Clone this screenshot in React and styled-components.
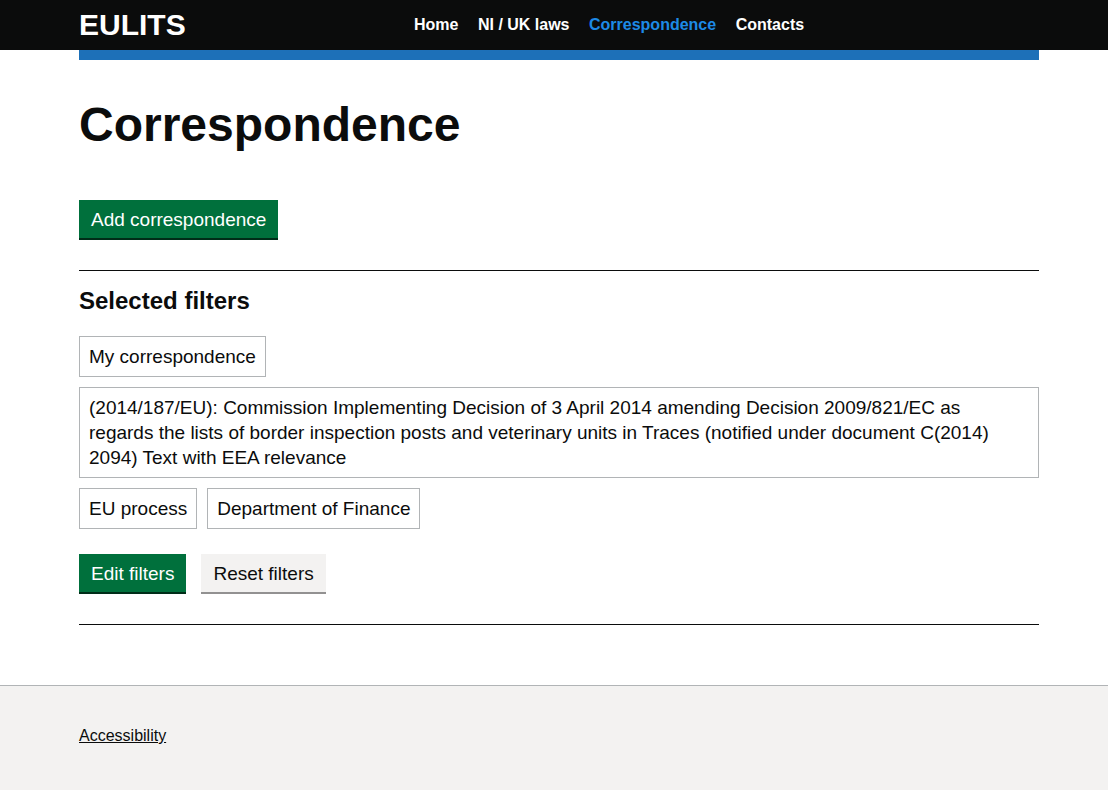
import React from "react";
import styled, { createGlobalStyle } from "styled-components";

const filters = [
  "My correspondence",
  "(2014/187/EU): Commission Implementing Decision of 3 April 2014 amending Decision 2009/821/EC as regards the lists of border inspection posts and veterinary units in Traces (notified under document C(2014) 2094) Text with EEA relevance",
  "EU process",
  "Department of Finance",
];

const navItems = [
  { label: "Home" },
  { label: "NI / UK laws" },
  { label: "Correspondence", active: true },
  { label: "Contacts" },
];

const App = () => {
  return (
    <Page>
      <GlobalStyle />
      <Header>
        <HeaderInner>
          <LogoCol>
            <Logo href="#">EULITS</Logo>
          </LogoCol>
          <Nav>
            {navItems.map((item) => (
              <NavLink key={item.label} href="#" $active={item.active}>
                {item.label}
              </NavLink>
            ))}
          </Nav>
        </HeaderInner>
      </Header>
      <Container>
        <BlueBar />
        <Main>
          <Title>Correspondence</Title>
          <Button $variant="primary">Add correspondence</Button>
          <Rule $top={32} $bottom={15} />
          <SubTitle>Selected filters</SubTitle>
          <TagList>
            {filters.map((f) => (
              <Tag key={f}>{f}</Tag>
            ))}
          </TagList>
          <ButtonRow>
            <Button $variant="primary">Edit filters</Button>
            <Button $variant="secondary">Reset filters</Button>
          </ButtonRow>
          <Rule $top={32} $bottom={0} />
        </Main>
      </Container>
      <Footer>
        <Container>
          <FooterLink href="#">Accessibility</FooterLink>
        </Container>
      </Footer>
    </Page>
  );
};

const GlobalStyle = createGlobalStyle`
  body {
    margin: 0;
    background: #fff;
    font-family: "Liberation Sans", Arial, sans-serif;
    color: #0b0c0c;
  }
`;

const Page = styled.div`
  min-height: 798px;
`;

const Header = styled.header`
  background: #0b0c0c;
  height: 50px;
`;

const Container = styled.div`
  width: 960px;
  margin-left: 79px;
`;

const HeaderInner = styled(Container)`
  display: flex;
  align-items: center;
  height: 50px;
`;

const LogoCol = styled.div`
  width: 33.333%;
`;

const Logo = styled.a`
  color: #fff;
  text-decoration: none;
  font-weight: 700;
  font-size: 30px;
  line-height: 30px;
`;

const Nav = styled.nav`
  display: flex;
  gap: 19.5px;
  padding-left: 15px;
`;

const NavLink = styled.a`
  color: ${(p) => (p.$active ? "#1d8ae6" : "#fff")};
  text-decoration: none;
  font-weight: 700;
  font-size: 16px;
  line-height: 20px;
`;

const BlueBar = styled.div`
  height: 10px;
  background: #1d70b8;
`;

const Main = styled.main`
  padding: 40px 0 60px;
`;

const Title = styled.h1`
  margin: 0 0 50px;
  font-size: 48px;
  line-height: 50px;
  font-weight: 700;
`;

const SubTitle = styled.h2`
  margin: 0 0 20px;
  font-size: 24px;
  line-height: 30px;
  font-weight: 700;
`;

const Button = styled.button`
  display: inline-block;
  font-family: "Liberation Sans", Arial, sans-serif;
  font-size: 19px;
  line-height: 19px;
  padding: 8px 10px 7px;
  border: 2px solid transparent;
  border-radius: 0;
  cursor: pointer;
  background: ${(p) => (p.$variant === "secondary" ? "#f3f2f1" : "#00703c")};
  color: ${(p) => (p.$variant === "secondary" ? "#0b0c0c" : "#fff")};
  box-shadow: 0 2px 0 ${(p) => (p.$variant === "secondary" ? "#929191" : "#002d18")};
`;

const Rule = styled.hr`
  border: 0;
  border-top: 1px solid #0b0c0c;
  margin: ${(p) => p.$top}px 0 ${(p) => p.$bottom}px;
`;

const TagList = styled.div`
  display: flex;
  flex-wrap: wrap;
  gap: 10px;
`;

const Tag = styled.div`
  border: 1px solid #b1b4b6;
  padding: 7px 9px;
  font-size: 19px;
  line-height: 25px;
`;

const ButtonRow = styled.div`
  display: flex;
  gap: 15px;
  margin-top: 25px;
  align-items: flex-start;
`;

const Footer = styled.footer`
  background: #f3f2f1;
  border-top: 1px solid #b1b4b6;
  padding: 40px 0 44px;
`;

const FooterLink = styled.a`
  color: #0b0c0c;
  font-size: 16px;
  line-height: 20px;
  text-decoration: underline;
`;

export default App;
